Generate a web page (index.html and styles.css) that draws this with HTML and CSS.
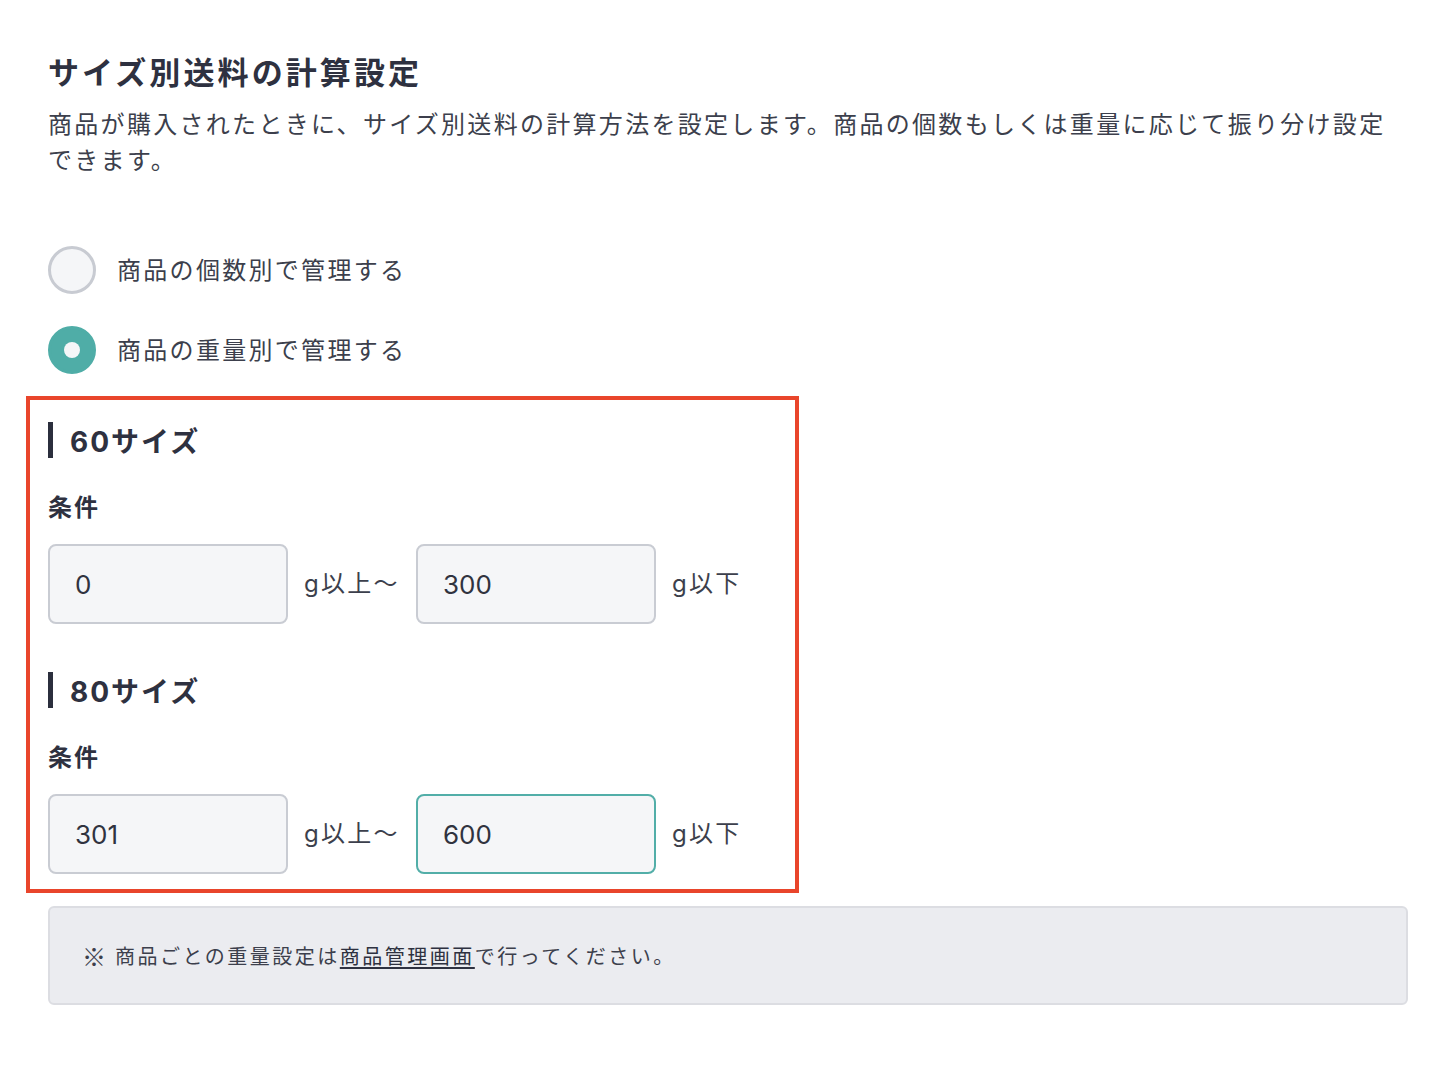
FILE: index.html
```html
<!DOCTYPE html>
<html lang="ja">
<head>
<meta charset="utf-8">
<title>サイズ別送料の計算設定</title>
<link rel="stylesheet" href="styles.css">
</head>
<body>
<main class="page">
  <h1 class="title">サイズ別送料の計算設定</h1>
  <p class="desc">商品が購入されたときに、サイズ別送料の計算方法を設定します。商品の個数もしくは重量に応じて振り分け設定できます。</p>

  <div class="radios">
    <label class="radio">
      <span class="radio-dot"></span>
      <span class="radio-label">商品の個数別で管理する</span>
    </label>
    <label class="radio">
      <span class="radio-dot is-checked"></span>
      <span class="radio-label">商品の重量別で管理する</span>
    </label>
  </div>

  <div class="highlight">
    <section class="size">
      <h2 class="size-title">60サイズ</h2>
      <div class="cond-label">条件</div>
      <div class="cond-row">
        <div class="input">0</div>
        <span class="unit">g以上〜</span>
        <div class="input">300</div>
        <span class="unit">g以下</span>
      </div>
    </section>
    <section class="size size-next">
      <h2 class="size-title">80サイズ</h2>
      <div class="cond-label">条件</div>
      <div class="cond-row">
        <div class="input">301</div>
        <span class="unit">g以上〜</span>
        <div class="input is-focus">600</div>
        <span class="unit">g以下</span>
      </div>
    </section>
  </div>

  <div class="notice"><span class="kome">※</span>商品ごとの重量設定は<a class="notice-link" href="#">商品管理画面</a>で行ってください。</div>
</main>
</body>
</html>
```

FILE: styles.css
```css
html, body {
  margin: 0;
  padding: 0;
  background: #ffffff;
}

body {
  font-family: "Inter", "Noto Sans CJK JP", sans-serif;
  color: #30333f;
}

.page {
  width: 1360px;
  padding: 50px 0 0 48px;
}

.title {
  margin: 0;
  font-size: 31px;
  line-height: 46px;
  font-weight: 700;
  letter-spacing: 3.1px;
  color: #2e3140;
}

.desc {
  max-width: 1345px;
  margin: 11px 0 0;
  font-size: 24px;
  line-height: 36px;
  letter-spacing: 2.3px;
  color: #3c3f4c;
}

.radios {
  margin-top: 67px;
  display: flex;
  flex-direction: column;
  gap: 32px;
}

.radio {
  display: flex;
  align-items: center;
  gap: 21px;
  height: 48px;
}

.radio-dot {
  box-sizing: border-box;
  width: 48px;
  height: 48px;
  border-radius: 50%;
  border: 3px solid #c8cbd2;
  background: #f5f6f8;
  display: flex;
  align-items: center;
  justify-content: center;
  flex: none;
}

.radio-dot.is-checked {
  border-color: #4fada7;
  background: #4fada7;
}

.radio-dot.is-checked::after {
  content: "";
  width: 16px;
  height: 16px;
  border-radius: 50%;
  background: #f5f6f8;
}

.radio-label {
  margin-bottom: 4px;
  font-size: 24px;
  letter-spacing: 2.3px;
  color: #3c3f4c;
}

.highlight {
  box-sizing: border-box;
  width: 773px;
  margin: 22px 0 0 -22px;
  border: 4px solid #e9452b;
  padding: 22px 18px 15px;
}

.size-next {
  margin-top: 48px;
}

.size-title {
  margin: 0;
  height: 36px;
  display: flex;
  align-items: center;
  border-left: 5px solid #2b2f3d;
  padding-left: 17px;
  font-size: 28px;
  font-weight: 700;
  letter-spacing: 2px;
  color: #2e3140;
}

.cond-label {
  margin-top: 32px;
  font-size: 24px;
  line-height: 36px;
  font-weight: 700;
  letter-spacing: 2px;
  color: #2e3140;
}

.cond-row {
  margin-top: 18px;
  display: flex;
  align-items: center;
  gap: 16px;
}

.input {
  box-sizing: border-box;
  width: 240px;
  height: 80px;
  border: 2px solid #c9ccd3;
  border-radius: 8px;
  background: #f5f6f8;
  padding-left: 25px;
  display: flex;
  align-items: center;
  font-size: 26px;
  color: #30333f;
}

.input.is-focus {
  border-color: #52aea8;
}

.unit {
  margin-bottom: 5px;
  font-size: 24px;
  letter-spacing: 2.3px;
  color: #3c3f4c;
}

.notice {
  box-sizing: border-box;
  margin-top: 13px;
  width: 1360px;
  height: 99px;
  border: 2px solid #dcdde2;
  border-radius: 6px;
  background: #ebecf0;
  padding-left: 32px;
  display: flex;
  align-items: center;
  font-family: "Noto Sans CJK JP", sans-serif;
  font-size: 20px;
  letter-spacing: 2.5px;
  color: #3c3f4c;
}

.kome {
  margin-right: 9px;
  font-size: 24px;
  letter-spacing: 0;
}

.notice-link {
  color: #2e3140;
  text-decoration: underline;
  text-underline-offset: 3px;
}
```
